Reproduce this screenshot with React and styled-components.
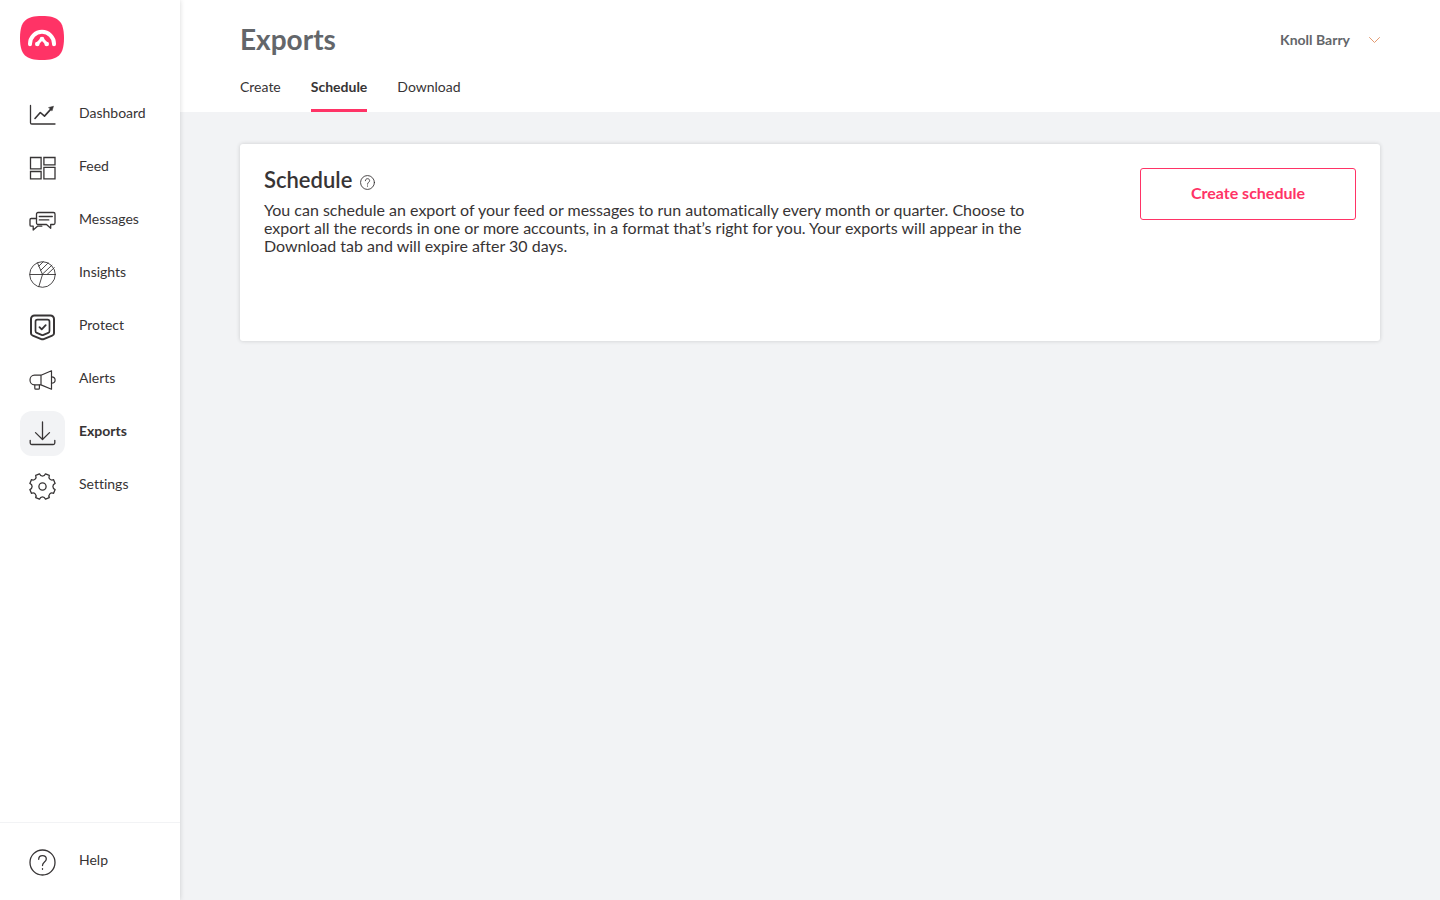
import React from 'react'
import styled, { createGlobalStyle, css } from 'styled-components'

const GlobalStyle = createGlobalStyle`
	* {
		box-sizing: border-box;
	}
	body {
		margin: 0;
		font-family: Lato, "Open Sans", sans-serif;
		font-size: 14px;
		font-variant-ligatures: none;
		color: #373435;
		background-color: #f2f3f5;
	}
	h1, h2, p, ul {
		margin: 0;
		padding: 0;
	}
	button {
		font-family: inherit;
		cursor: pointer;
	}
`
const Page = styled.div`
	display: flex;
	min-height: 100vh;
`
const Sidebar = styled.aside`
	display: flex;
	flex-direction: column;
	flex: none;
	width: 180px;
	background-color: #fff;
	box-shadow: 0 0 5px rgba(0, 0, 0, 0.16);
	z-index: 1;
`
const LogoLink = styled.a`
	display: block;
	width: 44px;
	height: 44px;
	margin: 16px 20px 33px;
`
const NavList = styled.ul`
	display: flex;
	flex-direction: column;
	gap: 8px;
	list-style: none;
`
const NavLink = styled.a`
	display: flex;
	gap: 14px;
	padding-left: 20px;
	line-height: 40px;
	color: inherit;
	text-decoration: none;
	${props =>
		props.$active &&
		css`
			font-weight: bold;
		`
	};
`
const IconBox = styled.span`
	display: flex;
	justify-content: center;
	align-items: center;
	width: 45px;
	height: 45px;
	border-radius: 12px;
	background-color: ${props => props.$active ? '#f2f3f5' : 'transparent'};
`
const SidebarFooter = styled.div`
	margin-top: auto;
	padding: 17px 0 15px;
	border-top: 1px solid #f2f3f5;
`
const Content = styled.div`
	flex: 1;
	min-width: 0;
`
const Header = styled.header`
	display: flex;
	flex-direction: column;
	justify-content: space-between;
	height: 112px;
	padding: 21px 60px 0;
	background-color: #fff;
`
const HeaderRow = styled.div`
	display: flex;
	justify-content: space-between;
	align-items: center;
`
const Title = styled.h1`
	font-size: 28px;
	line-height: 36px;
	color: #63666a;
`
const UserButton = styled.button`
	display: flex;
	align-items: center;
	gap: 19px;
	padding: 0;
	border: 0;
	background: none;
	font-size: 14px;
	font-weight: bold;
	color: #63666a;
`
const Tabs = styled.nav`
	display: flex;
	gap: 30px;
`
const Tab = styled.a`
	height: 37px;
	line-height: 24px;
	color: inherit;
	text-decoration: none;
	${props =>
		props.$active &&
		css`
			font-weight: bold;
			border-bottom: 3px solid #ff3366;
		`
	};
`
const Main = styled.main`
	padding: 32px 60px;
`
const Card = styled.section`
	display: flex;
	justify-content: space-between;
	align-items: flex-start;
	gap: 24px;
	min-height: 197px;
	padding: 24px;
	border-radius: 3px;
	background-color: #fff;
	box-shadow: 0 0 4px rgba(0, 0, 0, 0.16);
`
const CardText = styled.div`
	max-width: 780px;
`
const CardHeading = styled.div`
	display: flex;
	align-items: center;
	gap: 8px;
	margin-bottom: 9px;
`
const CardTitle = styled.h2`
	font-size: 22px;
	font-weight: 600;
	line-height: 24px;
`
const HintButton = styled.button`
	display: flex;
	padding: 5px 0 0;
	border: 0;
	background: none;
	color: inherit;
`
const Description = styled.p`
	font-size: 16px;
	line-height: 18px;
`
const OutlineButton = styled.button`
	flex: none;
	width: 216px;
	height: 52px;
	padding: 0 0 3px;
	border: 1px solid #ff3366;
	border-radius: 3px;
	background-color: #fff;
	font-size: 16px;
	font-weight: bold;
	color: #ff3366;
`
const Svg = styled.svg`
	display: block;
	fill: none;
	stroke: ${props => props.$color || 'currentColor'};
	stroke-linecap: round;
	stroke-linejoin: round;
`

const Icon = ({ size = 27, weight = 1.3, children }) => (
	<Svg width={size} height={size} viewBox="0 0 27 27" strokeWidth={weight} aria-hidden="true">
		{children}
	</Svg>
)

const Logo = () => (
	<svg width="44" height="44" viewBox="0 0 44 44" fill="none" strokeLinecap="round" strokeLinejoin="round">
		<path fill="#ff3366" d="M22 0C38 0 44 5 44 22S38 44 22 44 0 39 0 22 6 0 22 0z" />
		<path stroke="#fff" strokeWidth="4" d="M10 28.2v-.4a12 12 0 0 1 24 0v.4" />
		<path stroke="#fff" strokeWidth="3" d="M17.4 27.8L22 22.8l4.6 5" />
		<circle cx="17.3" cy="28" r="2.3" fill="#fff" />
		<circle cx="26.7" cy="28" r="2.3" fill="#fff" />
		<circle cx="22" cy="23" r="2.3" fill="#fff" />
	</svg>
)

const DashboardIcon = () => (
	<Icon>
		<path d="M1.5 3.5v17.2A1.3 1.3 0 0 0 2.8 22H26" />
		<path d="M6 16.5l5.300-6 4.200 3.600 6.600-7.200" strokeWidth="1.6" />
		<path d="M19.8 5.500l4.700-1.300-1.400 4.500z" fill="currentColor" strokeWidth="0.5" />
	</Icon>
)
const FeedIcon = () => (
	<Icon>
		<path d="M1.5 2.5h10.6v11.4H1.5zM14.9 2.5H26v7.3H14.9zM1.5 16.5h10.6v7.3H1.5zM14.9 12.4H26v11.4H14.9z" strokeLinejoin="miter" />
	</Icon>
)
const MessagesIcon = () => (
	<Icon>
		<path d="M9 4.5h15.500a1.500 1.500 0 0 1 1.500 1.500v9a1.500 1.500 0 0 1-1.500 1.500h-2.800v3.800l-4.200-3.800H9A1.500 1.500 0 0 1 7.500 15V6A1.500 1.500 0 0 1 9 4.500z" />
		<path d="M10.300 8.500h13M10.300 11.900h9.500" />
		<path d="M7.500 10.500H2.200A1.200 1.200 0 0 0 1 11.700V17a1.200 1.200 0 0 0 1.200 1.200h2V22l4.300-3.800h4.300" />
	</Icon>
)
const InsightsIcon = () => (
	<Icon weight={0.9}>
		<circle cx="13.5" cy="13.5" r="12.8" />
		<path d="M.8 13.5h25.400M13.500 13.500L8.500 1.900M13.500 13.500L9.800 25.700" />
		<path d="M9.800 5.200l4.400-4.400M11.600 9.400l7.500-7.400M13.300 13.300l9.600-9.100M18.300 13.300l7-6.600" />
	</Icon>
)
const ProtectIcon = () => (
	<Icon weight={2}>
		<path d="M5.500 1.500h16A3.500 3.500 0 0 1 25 5v14.200a2.500 2.500 0 0 1-1.800 2.400l-8.500 3.500a3 3 0 0 1-2.400 0l-8.500-3.500A2.500 2.500 0 0 1 2 19.200V5a3.500 3.500 0 0 1 3.500-3.500z" />
		<path d="M8.500 5.700h10a2 2 0 0 1 2 2V17a2 2 0 0 1-1.300 1.900l-4.700 2a2.500 2.500 0 0 1-2 0l-4.700-2A2 2 0 0 1 6.500 17V7.700a2 2 0 0 1 2-2z" strokeWidth="1.700" />
		<path d="M10.500 13.200l2.200 2.200 4-4.200" strokeWidth="1.800" />
	</Icon>
)
const AlertsIcon = () => (
	<Icon weight={1.2}>
		<path d="M12 8.200H5.500C2.800 8.200 1 10.300 1 13s1.800 4.900 4.500 4.900H12zM12 8.200l10.500-4.400v18.400L12 17.900" />
		<path d="M22.500 9.800c2 0 3.600 1.200 3.600 3.200s-1.600 3.200-3.600 3.200M5.800 18v3.200a1 1 0 0 0 1 1h2.600a1 1 0 0 0 1-1V18" />
	</Icon>
)
const ExportsIcon = () => (
	<Icon>
		<path d="M13.500 2v17.300M6.500 12.600l7 6.900 7-6.900M1.200 20.300V23a1.500 1.500 0 0 0 1.500 1.500h21.600a1.500 1.500 0 0 0 1.500-1.500v-2.700" />
	</Icon>
)

const polar = (radius, degrees) => {
	const angle = degrees * Math.PI / 180;
	return `${(13.5 + radius * Math.cos(angle)).toFixed(2)} ${(13.5 + radius * Math.sin(angle)).toFixed(2)}`;
}
// eight teeth, with a rounded valley after each of them
const gearPath = [0, 1, 2, 3, 4, 5, 6, 7].map(i => {
	const tooth = 22.5 + i * 45;
	return `${i ? 'L' : 'M'}${polar(13, tooth - 9)} L${polar(13, tooth + 9)} C${polar(9.8, tooth + 12)} ${polar(9.8, tooth + 33)} ${polar(13, tooth + 36)}`;
}).join(' ') + 'z'

const SettingsIcon = () => (
	<Icon>
		<path d={gearPath} />
		<circle cx="13.5" cy="13.5" r="3.6" />
	</Icon>
)
const HelpIcon = (props) => (
	<Icon {...props}>
		<circle cx="13.5" cy="13.5" r="12.5" />
		<path d="M9.700 10.300c0-2.200 1.600-3.700 3.800-3.700s3.800 1.400 3.800 3.400c0 3.200-3.800 3-3.800 6.500M13.500 19.600v.7" />
	</Icon>
)
const ChevronIcon = () => (
	<Svg width="11" height="7" viewBox="0 0 11 7" $color="#e39a70" aria-hidden="true">
		<path d="M.5 1.500l5 5 5-5" />
	</Svg>
)

const navItems = [
	{ label: 'Dashboard', Glyph: DashboardIcon },
	{ label: 'Feed', Glyph: FeedIcon },
	{ label: 'Messages', Glyph: MessagesIcon },
	{ label: 'Insights', Glyph: InsightsIcon },
	{ label: 'Protect', Glyph: ProtectIcon },
	{ label: 'Alerts', Glyph: AlertsIcon },
	{ label: 'Exports', Glyph: ExportsIcon },
	{ label: 'Settings', Glyph: SettingsIcon }
]

const NavItem = ({ label, Glyph, active }) => (
	<NavLink href="#" $active={active} aria-current={active ? 'page' : undefined}>
		<IconBox $active={active}><Glyph /></IconBox>
		{label}
	</NavLink>
)

const App = () => (
	<Page>
		<GlobalStyle />
		<Sidebar>
			<LogoLink href="#" aria-label="Home"><Logo /></LogoLink>
			<NavList>
				{navItems.map(item => (
					<li key={item.label}>
						<NavItem {...item} active={item.label === 'Exports'} />
					</li>
				))}
			</NavList>
			<SidebarFooter>
				<NavItem label="Help" Glyph={HelpIcon} />
			</SidebarFooter>
		</Sidebar>
		<Content>
			<Header>
				<HeaderRow>
					<Title>Exports</Title>
					<UserButton>Knoll Barry <ChevronIcon /></UserButton>
				</HeaderRow>
				<Tabs>
					<Tab href="#">Create</Tab>
					<Tab href="#" $active>Schedule</Tab>
					<Tab href="#">Download</Tab>
				</Tabs>
			</Header>
			<Main>
				<Card>
					<CardText>
						<CardHeading>
							<CardTitle>Schedule</CardTitle>
							<HintButton aria-label="About schedules"><HelpIcon size={15} weight={1.6} /></HintButton>
						</CardHeading>
						<Description>
							You can schedule an export of your feed or messages to run automatically every month or quarter. Choose to export all the records in one or more accounts, in a format that’s right for you. Your exports will appear in the Download tab and will expire after 30 days.
						</Description>
					</CardText>
					<OutlineButton>Create schedule</OutlineButton>
				</Card>
			</Main>
		</Content>
	</Page>
)

export default App
